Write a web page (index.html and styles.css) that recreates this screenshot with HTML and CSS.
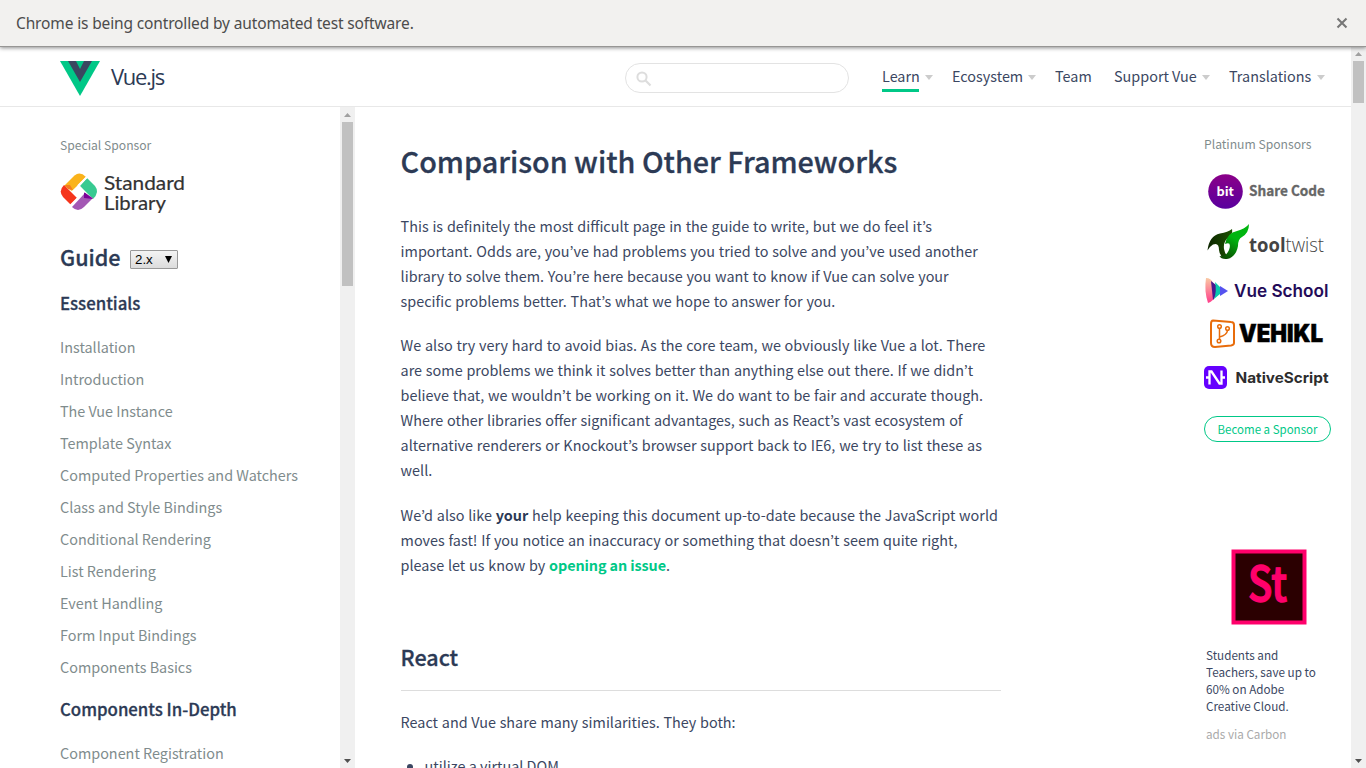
FILE: index.html
```html
<!DOCTYPE html>
<html lang="en">
<head>
<meta charset="utf-8">
<title>Comparison with Other Frameworks — Vue.js</title>
<link rel="stylesheet" href="styles.css">
</head>
<body>
<div class="infobar"><span class="infobar-text">Chrome is being controlled by automated test software.</span>
<svg class="infobar-close" width="12" height="12" viewBox="0 0 12 12"><path d="M1.5 1.5 10.500 10.500M10.500 1.5 1.5 10.500" stroke="#777" stroke-width="2.1"/></svg></div>
<div class="viewport">
<div class="page">
<header class="header">
<a class="logo"><svg width="40" height="35" viewBox="0 0 40 35"><path d="M0 0h40L20 35z" fill="#00c887"/><path d="M8 0h8l4 8 4-8h8L20 21z" fill="#3b4760"/></svg><span class="logo-text">Vue.js</span></a>
<nav class="nav">
<div class="search"><svg width="16" height="16" viewBox="0 0 16 16"><circle cx="6" cy="6" r="4.6" fill="none" stroke="#ddd" stroke-width="2"/><path d="m9.3 9.3 5.2 5.2" stroke="#ddd" stroke-width="2.2"/></svg></div>
<a class="nav-link learn current">Learn</a><i class="caret"></i>
<a class="nav-link eco">Ecosystem</a><i class="caret"></i>
<a class="nav-link team">Team</a>
<a class="nav-link support">Support Vue</a><i class="caret"></i>
<a class="nav-link trans">Translations</a><i class="caret"></i>
</nav>
</header>
<div class="columns">
<aside class="sidebar">
<p class="sponsor-label">Special Sponsor</p>
<svg class="stdlib" width="126" height="46" viewBox="0 0 126 46">
<path d="M4 14 14.500 3.500Q20-1 26 5L12 19z" fill="#fab31b"/>
<path d="M27 6 35 14Q40 20 33 27L20 14z" fill="#38ca91"/>
<path d="M33 26 24 35Q18 41 12 35L25 21z" fill="#a358b4"/>
<path d="M11 33 3 25Q-2 19 4 13L17 26z" fill="#f5351c"/>
<path d="M5 13 8 17 13 18 10 13z" fill="#f47c20"/><path d="M24 20 33 27 24 26z" fill="#7a0196"/>
<path d="m19 13 6 7-6 6-7-7z" fill="#fff"/><path d="m18 14 9-9M10 34l9-9" stroke="#fff" stroke-width="2"/>
<g font-family="Lato, sans-serif" font-size="20" fill="#333" stroke="#333" stroke-width=".2"><text x="44" y="18" textLength="81" lengthAdjust="spacingAndGlyphs">Standard</text><text x="44" y="38" textLength="62" lengthAdjust="spacingAndGlyphs">Library</text></g>
</svg>
<div class="guide"><h2>Guide</h2><span class="version">2.x<svg width="7" height="7" viewBox="0 0 7 7"><path d="M0 0h7L3.5 7z"/></svg></span></div>
<h3>Essentials</h3>
<ul class="menu"><li>Installation</li><li>Introduction</li><li>The Vue Instance</li><li>Template Syntax</li><li>Computed Properties and Watchers</li><li>Class and Style Bindings</li><li>Conditional Rendering</li><li>List Rendering</li><li>Event Handling</li><li>Form Input Bindings</li><li>Components Basics</li></ul>
<h3>Components In-Depth</h3>
<ul class="menu"><li>Component Registration</li></ul>
</aside>
<div class="scrollbar inner"><svg width="15" height="15"><path d="M4 10h7L7.5 6z" fill="#a0a0a0"/></svg><i class="thumb"></i><svg class="down" width="15" height="15"><path d="M4 6h7l-3.500 4z" fill="#505050"/></svg></div>
<main class="content">
<h1>Comparison with Other Frameworks</h1>
<p>This is definitely the most difficult page in the guide to write, but we do feel it’s<br>important. Odds are, you’ve had problems you tried to solve and you’ve used another<br>library to solve them. You’re here because you want to know if Vue can solve your<br>specific problems better. That’s what we hope to answer for you.</p>
<p>We also try very hard to avoid bias. As the core team, we obviously like Vue a lot. There<br>are some problems we think it solves better than anything else out there. If we didn’t<br>believe that, we wouldn’t be working on it. We do want to be fair and accurate though.<br>Where other libraries offer significant advantages, such as React’s vast ecosystem of<br>alternative renderers or Knockout’s browser support back to IE6, we try to list these as<br>well.</p>
<p class="help">We’d also like <strong>your</strong> help keeping this document up-to-date because the JavaScript world<br>moves fast! If you notice an inaccuracy or something that doesn’t seem quite right,<br>please let us know by <a>opening an issue</a>.</p>
<h2>React</h2>
<p class="both">React and Vue share many similarities. They both:</p>
<ul><li>utilize a virtual DOM</li></ul>
</main>
<aside class="sponsors">
<p class="platinum">Platinum Sponsors</p>
<svg class="logos" width="130" height="225" viewBox="1203 170 130 225">
<defs><linearGradient id="bit" x2="0" y2="1"><stop stop-color="#8b0088"/><stop offset="1" stop-color="#59009e"/></linearGradient><linearGradient id="dark"><stop stop-color="#0c2500"/><stop offset="1" stop-color="#1d5200"/></linearGradient><linearGradient id="leaf" x1=".2" y1="1" x2=".7" y2="0"><stop stop-color="#0b4a00"/><stop offset=".6" stop-color="#00b510"/></linearGradient><linearGradient id="peach" x2="0" y2="1"><stop stop-color="#f9c9a3"/><stop offset="1" stop-color="#ff3d8b"/></linearGradient></defs>
<circle cx="1225.500" cy="191.500" r="17.300" fill="url(#bit)"/>
<g font-family="Noto Sans CJK KR, sans-serif" font-weight="700"><text x="1216.500" y="196" font-size="12" fill="#fff" textLength="17.500" lengthAdjust="spacingAndGlyphs">bit</text><text x="1249" y="196" font-size="14" fill="#666" stroke="#666" stroke-width=".3" textLength="76" lengthAdjust="spacingAndGlyphs">Share Code</text></g>
<path d="M1207.500 250.500Q1209 236 1220 233.500Q1228 232 1232 229Q1233 234 1229 237Q1223 241 1224 249Q1225 256 1231 258Q1220 260 1219 250Q1219 242 1213 244.500Q1209 247 1207.500 250.500z" fill="url(#dark)"/>
<path d="M1225 244Q1227 233 1237 231Q1245 229 1249 224Q1249 233 1242 237Q1238 239 1238 246Q1236 257 1227 259Q1221 259.500 1219.500 256Q1226 257 1229 250Q1232 241 1225 244z" fill="url(#leaf)"/>
<text x="1249" y="251.500" font-family="Open Sans, sans-serif" font-size="20" font-weight="300" fill="#444" textLength="75" lengthAdjust="spacingAndGlyphs"><tspan font-weight="700">tool</tspan>twist</text>
<path d="M1206 278Q1211 278 1213 283L1214 299Q1211 302 1208 303Q1204 291 1206 278z" fill="url(#peach)"/><path d="M1211 281 1221 289 1213 300z" fill="#4b168e"/><path d="M1215 282 1220 287V294L1214 299Q1217 291 1215 282z" fill="#09c8ad"/><path d="M1220 286 1228 291 1220 296z" fill="#5552ef"/>
<text x="1234" y="297" font-family="Inter, sans-serif" font-size="17.500" font-weight="600" fill="#240b58" textLength="94.500" lengthAdjust="spacingAndGlyphs">Vue School</text>
<path d="M1213 320.500 1231 322Q1234 322 1234 325V343Q1234 345 1231 345.500L1215 347Q1211 347 1211 343V324Q1211 320.500 1213 320.500z" fill="none" stroke="#e86c0b" stroke-width="2"/>
<g fill="none" stroke="#e86c0b" stroke-width="1.500"><circle cx="1219.500" cy="326.500" r="1.800"/><circle cx="1227.500" cy="328.500" r="1.800"/><circle cx="1219" cy="341" r="1.800"/><path d="M1219.500 328.500V339M1219.500 337Q1227 335 1227.500 330.500"/></g>
<text x="1239" y="342" font-family="Inter, sans-serif" font-size="24" font-weight="900" fill="#000" stroke="#000" stroke-width=".5" textLength="84" lengthAdjust="spacingAndGlyphs">VEHIKL</text>
<rect x="1204" y="366" width="23" height="23" rx="5" fill="#6500ff"/><path d="M1206 377.500H1208.500M1222.500 377.500H1225M1209.500 384.500V371.500H1211.500L1219.500 383.500H1221.500V370.500" fill="none" stroke="#fff" stroke-width="2.300"/>
<text x="1235.500" y="383" font-family="Inter, sans-serif" font-size="14.500" font-weight="700" fill="#2d2d2d" textLength="93" lengthAdjust="spacingAndGlyphs">NativeScript</text>
</svg>
<a class="become">Become a Sponsor</a>
<svg class="ad" width="76" height="76" viewBox="0 0 76 76"><path d="M2.500 2.500h71v71h-71z" fill="#2b0001" stroke="#ff006b" stroke-width="4"/><text x="17" y="52" font-family="Noto Sans CJK KR, sans-serif" font-size="47" font-weight="500" fill="#ff006b" stroke="#ff006b" stroke-width="1.4" textLength="39" lengthAdjust="spacingAndGlyphs">St</text></svg>
<p class="ad-text">Students and<br>Teachers, save up to<br>60% on Adobe<br>Creative Cloud.</p>
<p class="via">ads via Carbon</p>
</aside>
</div>
</div>
<div class="scrollbar outer"><svg width="15" height="14"><path d="M4 9h7L7.500 5z" fill="#a0a0a0"/></svg><i class="thumb"></i><svg class="down" width="15" height="15"><path d="M4 6h7l-3.500 4z" fill="#505050"/></svg></div>
</div>
</body>
</html>
```
FILE: styles.css
```css
* { box-sizing: border-box; }
body { margin: 0; height: 768px; overflow: hidden; display: flex; flex-direction: column; background: #fff; color: #3b4762; font-family: "Noto Sans CJK KR", sans-serif; font-size: 14.4px; }
h1, h2, h3, p, ul { margin: 0; padding: 0; }
h1, h2, h3 { color: #2c3a55; font-weight: 500; -webkit-text-stroke: .3px currentColor; white-space: nowrap; }
.infobar { flex: none; height: 47px; display: flex; align-items: center; justify-content: space-between; padding: 0 18px 0 16px; background: #f2f1ef; border-bottom: 1px solid #979694; box-shadow: 0 1px 4px rgba(0,0,0,.45); z-index: 1; }
.infobar-text { font: 15.5px "Noto Sans", sans-serif; color: #4c4c4c; letter-spacing: -.14px; }
.viewport { flex: 1; min-height: 0; display: flex; }
.page { flex: 1; min-width: 0; display: flex; flex-direction: column; }
.header { flex: none; height: 60px; border-bottom: 1px solid #e8e8e8; display: flex; align-items: center; justify-content: space-between; padding: 2px 26px 0 60px; }
.logo { display: flex; align-items: center; gap: 11px; }
.logo svg { margin-top: 2px; }
.logo-text { font: 22px/30px "Open Sans", sans-serif; letter-spacing: -1.3px; color: #2c3a55; margin-top: -3px; }
.nav { display: flex; align-items: center; white-space: nowrap; line-height: 24px; }
.search { width: 224px; height: 30px; border: 1px solid #e3e3e3; border-radius: 15px; padding: 7px 10px; margin-right: 33px; display: flex; }
.nav-link { height: 28px; }
.learn { width: 37px; border-bottom: 3px solid #00c887; }
.eco { width: 71px; margin-right: -1px; }
.team { width: 36px; margin-right: 23px; }
.support { width: 82px; }
.trans { width: 82px; }
.caret { border: 4px solid transparent; border-top: 5px solid #ccc; border-bottom: 0; margin: 0 19px 0 6px; }
.trans + .caret { margin-right: 0; }
.columns { flex: 1; min-height: 0; display: flex; overflow: hidden; }
.sidebar { width: 340px; padding: 28px 0 0 60px; overflow: hidden; }
.sponsor-label, .platinum { font-size: 12.150px; line-height: 20px; color: #7f8c8d; }
.stdlib { display: block; margin: 17px 0 0; }
.guide { display: flex; align-items: center; height: 36px; margin-top: 21px; }
.guide h2 { font-size: 21.6px; line-height: 36px; width: 70px; }
.version { width: 48px; height: 19px; margin-top: 4px; border: 1px solid #999; border-radius: 1px; background: linear-gradient(#f4f4f4, #dcdcdc); font: 13.33px/17px "Liberation Sans", sans-serif; color: #000; padding: 0 5px 0 4px; display: flex; align-items: center; justify-content: space-between; }
.sidebar h3 { font-size: 16.800px; line-height: 30px; margin: 13px 0 13px; }
.menu { list-style: none; color: #7f8c8d; line-height: 32px; }
.sidebar .menu + h3 { margin-top: 11px; }
.scrollbar { flex: none; width: 15px; background: #f0f0f0; display: flex; flex-direction: column; align-items: center; }
.scrollbar svg { flex: none; display: block; }
.scrollbar .thumb { width: 11px; background: #c1c1c1; }
.inner .thumb { height: 164px; }
.outer .thumb { height: 42px; }
.scrollbar .down { margin-top: auto; }
.content { width: 646px; padding: 32px 0 0 45.600px; white-space: nowrap; line-height: 25px; }
.content h1 { font-size: 28.750px; line-height: 44px; margin-bottom: 30px; }
.content p { margin-bottom: 19px; word-spacing: .55px; }
.content p + p.help { margin-top: 20px; }
strong, .content a { font-weight: 700; }
.content strong { color: #2c3a55; }
.content a { color: #00c887; word-spacing: 0; letter-spacing: -.1px; }
.content h2 { font-size: 21.500px; line-height: 36px; margin-top: 62px; padding-bottom: 14px; height: 52px; border-bottom: 1px solid #ddd; margin-bottom: 18px; }
.content ul { padding-left: 24px; }
.sponsors { margin-left: 203px; width: 130px; padding-top: 27px; white-space: nowrap; }
.logos { display: block; margin: 16px 0 21px -1px; }
.become { display: block; width: 127px; height: 26px; border: 1px solid #00c887; border-radius: 13px; text-align: center; font-size: 11.500px; line-height: 24px; color: #00c887; }
.ad { display: block; margin: 107px 0 21px 26.500px; }
.ad-text { font-size: 11.700px; line-height: 17px; margin-left: 2px; }
.via { font-size: 11.700px; line-height: 17px; margin: 11px 0 0 2px; color: #aaa; }
```
